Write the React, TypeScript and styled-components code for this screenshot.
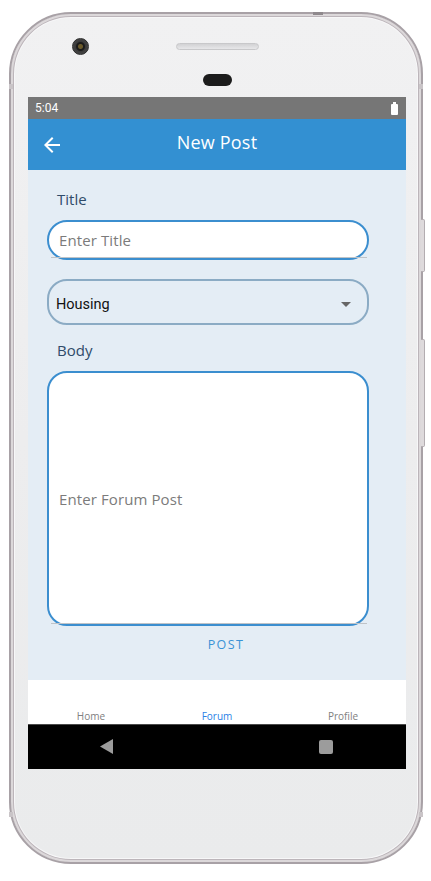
import React from "react";
import styled, { createGlobalStyle } from "styled-components";

const Global = createGlobalStyle`
  html, body { margin: 0; padding: 0; background: #ffffff; }
  body { font-family: "Open Sans", "Liberation Sans", sans-serif; }
  * { box-sizing: border-box; }
`;

const Page = styled.div`
  width: 431px;
  height: 881px;
  padding: 12px 0 0 9px;
`;

const Phone = styled.div`
  position: relative;
  width: 414px;
  height: 852px;
  border: 2px solid #a8a1a6;
  border-radius: 62px;
  background: linear-gradient(180deg, #f1f1f2 0%, #ededee 50%, #eaebec 100%);
  box-shadow: inset 0 0 0 2px #dcd8da, inset 0 0 0 3px #bcb5ba, inset 0 0 0 4px #f7f7f8;
  display: flex;
  flex-direction: column;
`;

const SideButton = styled.div<{ $top: number; $h: number }>`
  position: absolute;
  left: 100%;
  top: ${(p) => p.$top}px;
  width: 4px;
  height: ${(p) => p.$h}px;
  background: #dedadc;
  border: 1px solid #b3adb1;
  border-left: none;
  border-radius: 0 2px 2px 0;
`;

const FrameMark = styled.div<{ $top?: number; $left?: number; $side: "top" | "left" | "right" }>`
  position: absolute;
  background: #8f898d;
  ${(p) =>
    p.$side === "top"
      ? `top: -2px; left: ${p.$left}px; width: 10px; height: 3px;`
      : p.$side === "left"
      ? `left: -2px; top: ${p.$top}px; width: 4px; height: 5px; background: #c9c4c7;`
      : `right: -2px; top: ${p.$top}px; width: 4px; height: 5px; background: #c9c4c7;`}
`;

const TopBezel = styled.div`
  height: 83px;
  padding-top: 24px;
  display: flex;
  flex-direction: column;
`;

const SensorRow = styled.div`
  display: flex;
  align-items: center;
  height: 16px;
`;

const Camera = styled.div`
  margin-left: 61px;
  width: 17px;
  height: 17px;
  border-radius: 50%;
  background: radial-gradient(circle at 50% 50%, #6b5a2a 0 2px, #1b1b1b 3px 4px, #3a3a3a 5px, #555 100%);
  border: 1px solid #2a2a2a;
`;

const Speaker = styled.div`
  margin-left: 87px;
  width: 83px;
  height: 7px;
  border-radius: 4px;
  background: linear-gradient(180deg, #d2d2d4, #e7e7e9);
  border: 1px solid #c8c8ca;
`;

const ProximitySensor = styled.div`
  margin: 20px 0 0 192px;
  width: 29px;
  height: 12px;
  border-radius: 6px;
  background: #1c1c1c;
`;

const Screen = styled.div`
  margin: 0 15px 0 17px;
  height: 672px;
  display: flex;
  flex-direction: column;
  overflow: hidden;
`;

const StatusBar = styled.div`
  height: 22px;
  background: #767676;
  display: flex;
  align-items: center;
  justify-content: space-between;
  padding: 0 8px 0 7px;
  color: #ffffff;
  font-family: Roboto, "Liberation Sans", sans-serif;
  font-size: 12px;
`;

const Battery = styled.div`
  position: relative;
  width: 7px;
  height: 11px;
  margin-top: 2px;
  background: #ffffff;
  border-radius: 1px;
  &::before {
    content: "";
    position: absolute;
    top: -2px;
    left: 2px;
    width: 3px;
    height: 2px;
    background: #ffffff;
  }
`;

const AppBar = styled.div`
  height: 51px;
  background: #3390d2;
  display: flex;
  align-items: center;
  padding: 0 0 2px 12px;
  color: #ffffff;
`;

const BackButton = styled.div`
  width: 24px;
  height: 24px;
  display: flex;
  margin-top: 2px;
`;

const AppTitle = styled.div`
  flex: 1;
  text-align: center;
  margin: 0 36px 4px 0;
  font-size: 18px;
  letter-spacing: 0.2px;
`;

const Content = styled.div`
  flex: 1;
  background: #e4edf5;
  padding: 19px 37px 0 19px;
  display: flex;
  flex-direction: column;
`;

const Label = styled.div<{ $mt: number }>`
  margin-top: ${(p) => p.$mt}px;
  margin-left: 10px;
  font-size: 15px;
  line-height: 20px;
  color: #2f4b69;
`;

const Field = styled.div<{ $h: number; $mt: number }>`
  position: relative;
  margin-top: ${(p) => p.$mt}px;
  height: ${(p) => p.$h}px;
  background: #ffffff;
  border: 2px solid #3b8ecf;
  border-radius: 20px;
  display: flex;
  align-items: center;
  padding-left: 10px;
  &::after {
    content: "";
    position: absolute;
    left: 2px;
    right: 0;
    bottom: 0;
    height: 1px;
    background: #bfc3c7;
  }
`;

const Placeholder = styled.span`
  font-size: 15px;
  color: #7b7b7b;
  letter-spacing: 0.1px;
`;

const Select = styled.div`
  margin-top: 19px;
  height: 46px;
  border: 2px solid #8babc4;
  border-radius: 20px;
  display: flex;
  align-items: center;
  justify-content: space-between;
  padding: 5px 16px 0 7px;
  font-family: Roboto, "Liberation Sans", sans-serif;
  font-size: 14.5px;
  color: #111111;
`;

const ButtonRow = styled.div`
  margin-top: 10px;
  display: flex;
  justify-content: center;
  padding-left: 36px;
`;

const PostButton = styled.div`
  font-size: 12.5px;
  letter-spacing: 1.4px;
  color: #3a92d5;
  line-height: 18px;
`;

const BottomNav = styled.div`
  height: 44px;
  background: #ffffff;
  display: grid;
  grid-template-columns: 1fr 1fr 1fr;
  align-items: end;
  padding-bottom: 1px;
`;

const NavItem = styled.div<{ $active?: boolean }>`
  text-align: center;
  font-size: 10px;
  line-height: 14px;
  color: ${(p) => (p.$active ? "#2a7fe6" : "#808080")};
`;

const SystemNav = styled.div`
  height: 45px;
  background: #000000;
  border-top: 1px solid #4a4a4a;
  display: flex;
  align-items: center;
  padding: 0 0 1px 72px;
`;

const SquareKey = styled.div`
  margin-left: 206px;
  width: 14px;
  height: 14px;
  border-radius: 2px;
  background: #9c9c9c;
`;

export default function App() {
  return (
    <>
      <Global />
      <Page>
        <Phone>
          <FrameMark $side="top" $left={302} />
          <FrameMark $side="left" $top={70} />
          <FrameMark $side="right" $top={70} />
          <FrameMark $side="left" $top={798} />
          <FrameMark $side="right" $top={798} />
          <SideButton $top={205} $h={53} />
          <SideButton $top={325} $h={108} />
          <TopBezel>
            <SensorRow>
              <Camera />
              <Speaker />
            </SensorRow>
            <ProximitySensor />
          </TopBezel>
          <Screen>
            <StatusBar>
              <span>5:04</span>
              <Battery />
            </StatusBar>
            <AppBar>
              <BackButton>
                <svg width="24" height="24" viewBox="0 0 24 24" fill="#ffffff">
                  <path d="M20 11H7.83l5.59-5.59L12 4l-8 8 8 8 1.41-1.41L7.83 13H20v-2z" />
                </svg>
              </BackButton>
              <AppTitle>New Post</AppTitle>
            </AppBar>
            <Content>
              <Label $mt={0}>Title</Label>
              <Field $h={40} $mt={11}>
                <Placeholder>Enter Title</Placeholder>
              </Field>
              <Select>
                <span>Housing</span>
                <svg width="10" height="5" viewBox="0 0 10 5">
                  <path d="M0 0l5 5 5-5z" fill="#666666" />
                </svg>
              </Select>
              <Label $mt={15}>Body</Label>
              <Field $h={255} $mt={11}>
                <Placeholder>Enter Forum Post</Placeholder>
              </Field>
              <ButtonRow>
                <PostButton>POST</PostButton>
              </ButtonRow>
            </Content>
            <BottomNav>
              <NavItem>Home</NavItem>
              <NavItem $active>Forum</NavItem>
              <NavItem>Profile</NavItem>
            </BottomNav>
            <SystemNav>
              <svg width="13" height="15" viewBox="0 0 13 15">
                <path d="M13 0v15L0 7.5z" fill="#9c9c9c" />
              </svg>
              <SquareKey />
            </SystemNav>
          </Screen>
        </Phone>
      </Page>
    </>
  );
}
